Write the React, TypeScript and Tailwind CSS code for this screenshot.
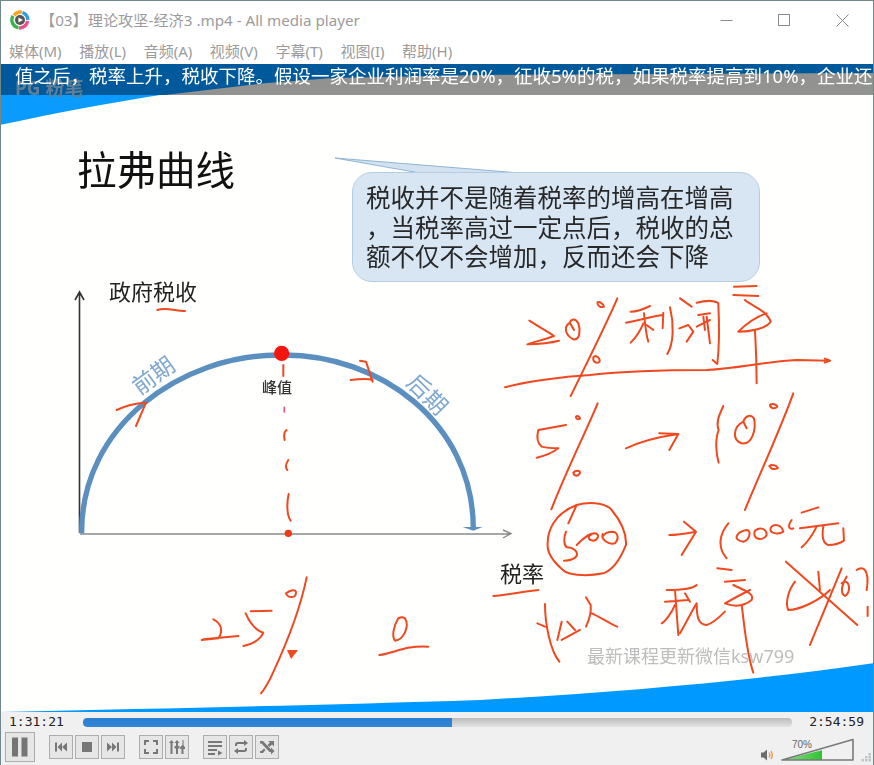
import type { ReactNode } from "react";

const cjk = "font-['Noto_Sans','Noto_Sans_CJK_SC',sans-serif]";

const menus = ["媒体(M)", "播放(L)", "音频(A)", "视频(V)", "字幕(T)", "视图(I)", "帮助(H)"];

// ink strokes, written in the coordinates of a crop scaled 3x
const inkTop = [
  "M148 122C175 140 205 155 222 168C195 178 165 185 142 193C175 192 205 190 237 182",
  "M270 128C250 140 255 165 280 178C300 182 302 150 295 130C285 112 272 118 270 128M272 132L282 150",
  "M412 55C380 130 320 250 272 348",
  "M352 68C355 62 372 72 372 80C362 84 352 78 352 68",
  "M340 232C350 222 362 238 358 246C348 252 338 244 340 232",
  "M510 78C490 88 465 95 452 95M438 128C480 120 520 108 548 105M492 100C495 130 498 165 505 185M490 130C480 155 465 175 452 188M500 135L520 150M550 98L548 145M570 82C582 130 582 190 562 222",
  "M600 55L635 80M598 145L625 135L640 155L620 185M650 68C680 60 705 62 715 70C718 130 718 200 712 252L698 240M655 105L690 100M650 140L690 120M670 110L675 150M680 110L690 190",
  "M762 20L830 18M760 45L835 48M795 60C810 75 860 90 872 125C860 145 810 155 775 155C800 130 830 110 860 100M825 150C828 200 830 260 830 310",
  "M75 322C130 305 250 290 330 285C420 275 520 270 680 270C780 265 850 245 950 240L1050 242M1035 236L1050 242L1035 248",
  "M258 435L175 450C170 470 172 490 185 500C205 505 225 505 235 505C215 520 195 528 170 533",
  "M353 370C320 450 260 570 214 688",
  "M288 410C292 405 300 410 300 416C294 420 286 416 288 410M280 578C286 570 300 570 300 578C296 590 282 590 280 578",
  "M438 505C480 485 540 470 595 462M538 460L595 462L568 510",
  "M730 378C715 410 708 430 716 450C705 480 708 520 716 548",
  "M790 425C760 440 755 480 785 490C815 495 830 450 822 415C810 400 795 410 790 425L800 445",
  "M940 340C900 450 840 580 795 690",
  "M870 375C875 370 890 372 892 380C885 388 872 386 870 375M868 558C875 552 890 556 894 564C885 570 872 568 868 558",
];

const inkBottom = [
  "M290 45C340 30 385 45 395 60C420 90 440 130 438 165C420 210 400 240 370 250C330 258 280 258 255 245C230 225 205 200 203 170C200 120 225 70 290 45L265 100",
  "M258 125C250 145 252 165 260 172C280 172 295 185 290 198C280 210 265 212 252 212",
  "M290 165C305 150 325 130 345 130C360 132 355 150 340 152C325 150 320 140 335 132M368 132C362 148 385 165 405 160C418 145 415 125 395 125C382 126 372 130 368 140",
  "M568 135C590 135 620 130 648 125M612 95L648 125L605 195",
  "M745 100C720 130 710 170 740 205M800 120C770 125 755 150 790 155C810 150 815 120 800 120M825 122C815 150 850 155 860 135C860 115 840 110 825 122M875 110C860 130 895 135 910 125C905 105 885 100 875 110M935 90C920 110 930 120 940 115",
  "M965 68L1015 52M960 115L1075 100M1010 110C1000 130 985 155 965 172M1030 110C1025 140 1030 160 1045 165C1060 165 1080 160 1092 152L1090 115",
  "M40 318C80 315 130 305 175 300",
  "M195 342C195 400 210 480 238 515M172 400L195 410M245 395L232 450M300 420L245 450M262 395L285 420",
  "M318 322L332 345C335 370 325 395 318 410M335 370C360 380 395 405 412 410",
  "M560 300C600 300 640 295 650 285M555 335L625 330M585 300L595 435M585 345C575 370 555 395 545 400M615 310L630 335M600 430C620 395 635 365 650 340C650 380 655 405 680 405C700 400 720 380 735 365",
  "M712 235L755 240M735 275L795 270M760 285C790 300 825 310 815 330C790 350 760 350 735 340C770 320 790 310 810 300M785 345C795 420 800 490 820 548",
  "M918 215L1132 405M945 275C925 300 915 340 925 360C960 360 1020 330 1050 300M1015 245L1020 300M1085 235L990 465M1085 280C1110 260 1115 310 1095 318C1080 310 1085 285 1100 260M1130 240C1150 225 1170 240 1160 300M1163 350L1163 378",
];

const inkLeft = [
  "M100 148C125 160 130 185 115 205L65 210M70 208L175 198",
  "M275 122L212 124M197 130C210 160 225 180 250 188C240 210 215 225 190 228",
  "M380 22C360 120 320 220 278 310C265 340 255 355 243 370",
  "M318 70C330 60 350 55 348 70C345 85 325 85 318 70",
  "M655 145C640 170 635 200 645 212C670 210 690 170 675 145C668 140 660 142 655 145",
  "M598 255C640 250 680 225 745 230",
];

const inkChart = [
  "M292 120C315 112 345 122 375 123",
  "M170 420C200 405 225 400 258 398L228 468",
  "M872 330C890 328 920 325 938 330M900 272L918 275L938 335",
  "M670 285L670 318M680 480C672 485 672 500 674 510M685 570C675 585 678 595 682 600M686 672C680 700 680 735 692 752",
];

function Ink({ x, y, paths }: { x: number; y: number; paths: string[] }) {
  return (
    <g transform={`translate(${x} ${y}) scale(0.3333)`} fill="none" stroke="#f0481f" strokeWidth="6" strokeLinecap="round" strokeLinejoin="round">
      {paths.map((d, i) => (
        <path key={i} d={d} />
      ))}
    </g>
  );
}

function SlideArt() {
  return (
    <svg className="absolute inset-0 h-full w-full" viewBox="1 64 872 648">
      <rect x="0" y="64" width="874" height="31" fill="#00599a" />
      <path d="M165 95L207 90L267 83L333 78L480 75L874 73V95Z" fill="#929290" />
      <path d="M0 95H160C110 103 60 112 0 125Z" fill="#0a9bff" />
      <path d="M0 712V712C180 708 330 705 480 700C620 692 760 680 874 663V712Z" fill="#0099ff" />

      <path d="M335 158L520 173H420Z" fill="#d2e2f1" stroke="#8fb6d6" strokeWidth="1" />

      <path d="M79.5 533V293M75 300L79.5 292L84 300" fill="none" stroke="#333" strokeWidth="1.6" />
      <path d="M80 534H511M503 530L511 533.5L503 538" fill="none" stroke="#8a8a8a" strokeWidth="1.4" />
      <g transform="translate(60 270) scale(0.3333)">
        <path d="M65 790C62 470 360 252 665 255C960 252 1240 460 1240 775" fill="none" stroke="#5b8fc0" strokeWidth="16" />
        <path d="M1208 771H1268L1240 782Z" fill="#5b8fc0" />
        <circle cx="665" cy="250" r="23" fill="#f5170f" />
        <circle cx="685" cy="790" r="11" fill="#ee3a18" />
        <path d="M673 410V428" stroke="#e0557a" strokeWidth="5" />
      </g>

      <Ink x={60} y={270} paths={inkChart} />
      <Ink x={480} y={280} paths={inkTop} />
      <Ink x={480} y={490} paths={inkBottom} />
      <Ink x={180} y={570} paths={inkLeft} />
      <path d="M287 650L298 650L291 659Z" fill="#f0481f" />
    </svg>
  );
}

function Slide() {
  return (
    <div className={`relative min-h-0 flex-1 overflow-hidden bg-[#fffffd] blur-[0.5px] ${cjk}`}>
      <SlideArt />
      <p className="absolute left-[14px] top-[15px] text-[19px] font-bold leading-none text-[#5f7f96]">PG 粉笔</p>
      <p className="absolute left-[14px] top-0 whitespace-nowrap text-[18.5px] leading-[23px] text-white">
        值之后，税率上升，税收下降。假设一家企业利润率是20%，征收5%的税，如果税率提高到10%，企业还
      </p>

      <h1 className="absolute left-[76px] top-[83px] text-[39.5px] leading-[46px] font-normal text-[#111]">拉弗曲线</h1>

      <div className="absolute left-[351px] top-[108px] h-[110px] w-[408px] rounded-[20px] border border-[#b5cde2] bg-[#d8e6f4] px-[13px] pt-[10px] text-[24.5px] leading-[29.5px] whitespace-pre text-[#282828]">
        <div>税收并不是随着税率的增高在增高</div>
        <div>，当税率高过一定点后，税收的总</div>
        <div>额不仅不会增加，反而还会下降</div>
      </div>

      <span className="absolute left-[108px] top-[213px] text-[22px] leading-[28px] text-[#222]">政府税收</span>
      <span className="absolute left-[499px] top-[495px] text-[22px] leading-[28px] text-[#222]">税率</span>
      <span className="absolute left-[261px] top-[313px] text-[15px] leading-[20px] font-medium text-[#333]">峰值</span>
      <span className="absolute left-[129px] top-[297px] -rotate-[36deg] text-[23px] leading-[28px] text-[#7fa7d0]">前期</span>
      <span className="absolute left-[404px] top-[316px] rotate-[45deg] text-[23px] leading-[28px] text-[#7fa7d0]">后期</span>
      <span className="absolute left-[586px] top-[580px] text-[18px] leading-[24px] text-[#bdbdbd]">最新课程更新微信ksw799</span>
    </div>
  );
}

function AppIcon() {
  return (
    <svg width="20" height="20" viewBox="0 0 20 20" fill="none" strokeWidth="3.4">
      <path d="M4 5.5A8 8 0 0 1 12 2.2" stroke="#f6a623" />
      <path d="M12.5 2.5A8 8 0 0 1 17.8 10" stroke="#2f9be0" />
      <path d="M17.6 11A8 8 0 0 1 9 17.9" stroke="#ee4d8a" />
      <path d="M8.5 17.8A8 8 0 0 1 3 5.8" stroke="#3bb54a" />
      <circle cx="10" cy="10" r="5" fill="#555" />
      <path d="M8.4 7.4L13 10L8.4 12.6Z" fill="#fff" />
    </svg>
  );
}

function TitleBar() {
  return (
    <div className="flex h-[38px] shrink-0 items-center pl-[9px]">
      <AppIcon />
      <span className="ml-[10px] text-[15.2px] text-[#9b9b9b]">【03】理论攻坚-经济3 .mp4 - All media player</span>
      <div className="ml-auto mr-[2px] flex items-center">
        <button className="flex h-[30px] w-[58px] items-center justify-center">
          <svg width="13" height="13" viewBox="0 0 13 13"><path d="M0.5 6.5H12.5" stroke="#8a8a8a" /></svg>
        </button>
        <button className="flex h-[30px] w-[58px] items-center justify-center">
          <svg width="13" height="13" viewBox="0 0 13 13" fill="none"><rect x="0.5" y="0.5" width="11" height="11" stroke="#8a8a8a" /></svg>
        </button>
        <button className="flex h-[30px] w-[58px] items-center justify-center">
          <svg width="13" height="13" viewBox="0 0 13 13"><path d="M0.5 0.5L12.5 12.5M12.5 0.5L0.5 12.5" stroke="#8a8a8a" /></svg>
        </button>
      </div>
    </div>
  );
}

function MenuBar() {
  return (
    <div className="flex h-[25px] shrink-0 items-center gap-[17.6px] pl-[8px] text-[15px] text-[#9b9b9b]">
      {menus.map((m) => (
        <span key={m}>{m}</span>
      ))}
    </div>
  );
}

function CtlButton({ children }: { children: ReactNode }) {
  return (
    <button className="flex h-[24px] w-[24px] items-center justify-center border border-[#adadad] bg-[#e6e6e6]">
      <svg width="18" height="18" viewBox="0 0 18 18" fill="#777" stroke="none">
        {children}
      </svg>
    </button>
  );
}

function Controls() {
  return (
    <div className="relative h-[53px] shrink-0 bg-[#f0f0f0] font-['DejaVu_Sans_Mono',monospace]">
      <div className="flex h-[20px] items-center pl-[8px] pr-[9px] text-[13px] text-[#222]">
        <span className="w-[74px]">1:31:21</span>
        <div className="h-[9px] w-[709px] overflow-hidden rounded-[4px] bg-gradient-to-b from-[#bcbcbc] to-[#e2e2e2]">
          <div className="h-full w-[369px] rounded-l-[4px] bg-gradient-to-b from-[#2a7fd4] to-[#3186d6]" />
        </div>
        <span className="ml-auto">2:54:59</span>
      </div>

      <div className="flex h-[30px] items-center pl-[4px]">
        <button className="flex h-[30px] w-[30px] items-center justify-center border border-[#adadad] bg-[#e6e6e6]">
          <svg width="18" height="20" viewBox="0 0 18 20" fill="#757575">
            <rect x="1" y="0.5" width="6" height="19" />
            <rect x="10.5" y="0.5" width="6" height="19" />
          </svg>
        </button>

        <div className="ml-[14px] flex gap-[2px]">
          <CtlButton>
            <path d="M3 4.5H5V13.5H3ZM5.5 9L10 4.5V13.5ZM10 9L15 4.5V13.5Z" />
          </CtlButton>
          <CtlButton>
            <rect x="4" y="4" width="10" height="10" />
          </CtlButton>
          <CtlButton>
            <path d="M3 4.5L8 9L3 13.5ZM8 4.5L12.5 9L8 13.5ZM13 4.5H15V13.5H13Z" />
          </CtlButton>
        </div>

        <div className="ml-[14px] flex gap-[2px]">
          <CtlButton>
            <path d="M2 2H7V4H4V7H2ZM11 2H16V7H14V4H11ZM2 11H4V14H7V16H2ZM14 11H16V16H11V14H14Z" />
          </CtlButton>
          <CtlButton>
            <path d="M3.5 2L6 5H4.5V16H2.5V5H1ZM9 2L11.5 5H10V8H11.5V10.5H10V16H8V10.5H6.5V8H8V5H6.5ZM14.5 2H15.5V7L17 9.5V11H15.5V16H13.5V11H12V9.5L14.5 7Z" />
          </CtlButton>
        </div>

        <div className="ml-[14px] flex gap-[2px]">
          <CtlButton>
            <path d="M2 3H16V5H2ZM2 7H16V9H2ZM2 11H11V13H2ZM2 15H9V17H2ZM12 12.5L16.5 15L12 17.5Z" />
          </CtlButton>
          <CtlButton>
            <path d="M3 8V6.5C3 5 4 4 5.5 4H12V2L16 5L12 8V6H5.5C5.2 6 5 6.2 5 6.5V8ZM15 10V11.5C15 13 14 14 12.5 14H6V16L2 13L6 10V12H12.5C12.8 12 13 11.8 13 11.5V10Z" />
          </CtlButton>
          <CtlButton>
            <path d="M2 3H5L13 11.5V9.5L16.5 13L13 16.5V14H11.5L3.5 5.5H2ZM10 3H16V8.5L14 6.5L11.5 9L9.5 7L12 4.5ZM2 13H3.5L6 10.5L7.5 12L5 15H2Z" />
          </CtlButton>
        </div>
      </div>

      <svg className="absolute left-[759px] top-[36px]" width="14" height="14" viewBox="0 0 14 14" fill="none">
        <path d="M1 4.5H3.5L7 1.5V12.5L3.5 9.5H1Z" fill="#6e6e6e" />
        <path d="M9 4.5C10 6 10 8 9 9.5M11 3C12.6 5.5 12.6 8.5 11 11" stroke="#f29330" strokeWidth="1.3" />
      </svg>

      <div className="absolute left-[780px] top-[26px] h-[24px] w-[74px]">
        <svg width="74" height="24" viewBox="0 0 74 24">
          <defs>
            <linearGradient id="vol" x1="0" x2="1" y1="0" y2="0">
              <stop offset="0" stopColor="#8fdc8f" />
              <stop offset="1" stopColor="#2fc42f" />
            </linearGradient>
          </defs>
          <path d="M1 22L41 12.2V22Z" fill="url(#vol)" />
          <path d="M1 22L72 1.5V22Z" fill="none" stroke="#7a7a7a" strokeWidth="1.6" strokeLinejoin="round" />
        </svg>
        <span className="absolute left-[11px] top-[1px] font-['Liberation_Sans',sans-serif] text-[10px] leading-[12px] text-[#666]">70%</span>
      </div>

      <svg className="absolute left-[860px] top-[41px]" width="11" height="9" viewBox="0 0 11 9" fill="#c4c4c4">
        <rect x="7.5" y="0" width="2.5" height="2.5" />
        <rect x="4" y="3" width="2.5" height="2.5" />
        <rect x="7.5" y="3" width="2.5" height="2.5" />
        <rect x="0.5" y="6" width="2.5" height="2.5" />
        <rect x="4" y="6" width="2.5" height="2.5" />
        <rect x="7.5" y="6" width="2.5" height="2.5" />
      </svg>
    </div>
  );
}

export default function App() {
  return (
    <div className={`flex h-[765px] w-[874px] flex-col overflow-hidden border-x border-t border-[#71888a] bg-white ${cjk}`}>
      <TitleBar />
      <MenuBar />
      <Slide />
      <Controls />
    </div>
  );
}
